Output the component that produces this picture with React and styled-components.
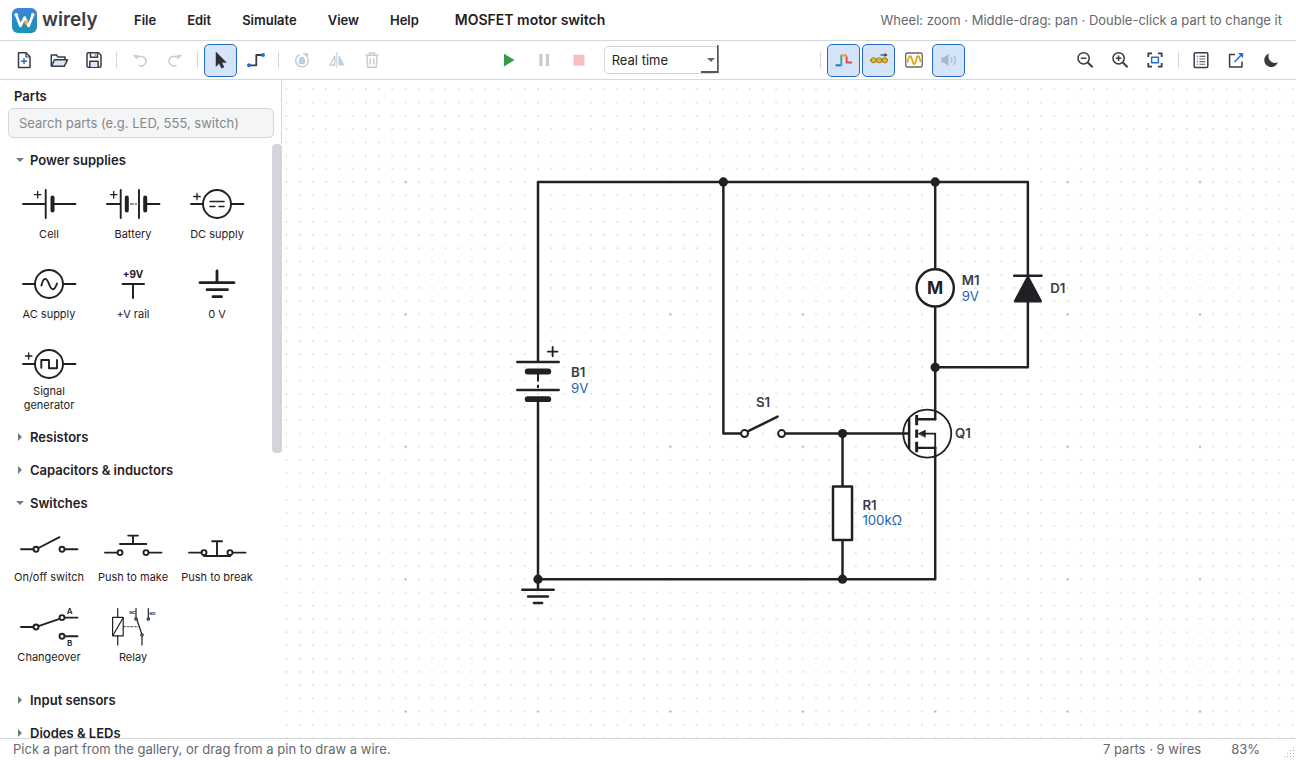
import React, { useState } from "react";
import styled, { createGlobalStyle } from "styled-components";

const GlobalStyle = createGlobalStyle`
  * {
    box-sizing: border-box;
  }
  body {
    margin: 0;
    font-family: Inter, "Liberation Sans", sans-serif;
    font-size: 13px;
    color: #1f2125;
    background: #fff;
  }
  button, input, select {
    font: inherit;
    color: inherit;
  }
`;

const Page = styled.div`
  display: flex;
  flex-direction: column;
  height: 100vh;
  overflow: hidden;
`;

const Header = styled.header`
  display: flex;
  align-items: center;
  height: 41px;
  padding: 0 14px 0 12px;
  border-bottom: 1px solid #d6d7da;
`;
const Brand = styled.a`
  display: flex;
  align-items: center;
  gap: 5px;
  width: 107px;
  font-size: 19px;
  font-weight: 600;
  line-height: 26px;
  color: #3a3c45;
  text-decoration: none;
`;
const Menu = styled.nav`
  display: flex;
`;
const MenuButton = styled.button`
  padding: 0 16px 0 15px;
  border: 0;
  background: none;
  font-weight: 600;
  line-height: 24px;
`;
const DocTitle = styled.h1`
  margin: 0 0 0 20px;
  font-size: 14px;
  font-weight: 600;
  line-height: 20px;
`;
const Hint = styled.span`
  margin-left: auto;
  color: #66686d;
`;

const Toolbar = styled.div`
  display: flex;
  align-items: center;
  justify-content: space-between;
  height: 39px;
  padding: 0 8px 0 7px;
  border-bottom: 1px solid #d6d7da;
`;
const ToolGroup = styled.div`
  display: flex;
  align-items: center;
  gap: 2px;
`;
const RunGroup = styled(ToolGroup)`
  margin-left: 7px;
`;
const DisplayGroup = styled(ToolGroup)`
  margin-right: 6px;
`;
const ToolButton = styled.button`
  display: flex;
  align-items: center;
  justify-content: center;
  width: 33px;
  height: 33px;
  padding: 0;
  border: 1px solid ${(props) => (props.$active ? "#1f6bc8" : "transparent")};
  border-radius: 5px;
  background: ${(props) => (props.$active ? "#d5e4f8" : "transparent")};
`;
const Separator = styled.span`
  width: 1px;
  height: 16px;
  margin: 0 4px;
  background: #d6d7da;
`;
const SpeedBox = styled.div`
  position: relative;
  margin-left: 6px;
  &::after {
    content: "";
    position: absolute;
    right: 0;
    bottom: 1px;
    width: 16px;
    height: 26px;
    border: solid #55575c;
    border-width: 0 2px 2px 0;
    clip-path: polygon(14px 0, 100% 0, 100% 100%, 0 100%, 0 24px, 14px 24px);
    pointer-events: none;
  }
`;
const SpeedSelect = styled.select`
  display: block;
  width: 115px;
  height: 28px;
  padding: 0 7px;
  border: 1px solid #d6d7da;
  border-radius: 5px;
  background: #fff;
  appearance: none;
`;
const Caret = styled.span`
  position: absolute;
  right: 4px;
  top: 12px;
  border: 4px solid transparent;
  border-top-color: #66686d;
  border-bottom: 0;
`;

const Body = styled.main`
  display: flex;
  flex: 1;
  min-height: 0;
`;
const Sidebar = styled.aside`
  display: flex;
  flex-direction: column;
  width: 282px;
  flex-shrink: 0;
`;
const SidebarHead = styled.div`
  height: 64px;
  padding: 8px 7px 0 8px;
  border-right: 1px solid #d6d7da;
`;
const SidebarTitle = styled.h2`
  margin: 0 0 4px 6px;
  font-size: 13px;
  font-weight: 600;
  line-height: 16px;
`;
const Search = styled.input`
  display: block;
  width: 100%;
  height: 30px;
  padding: 0 10px;
  border: 1px solid #d6d7da;
  border-radius: 5px;
  background: #f4f5f6;
  &::placeholder {
    color: #86888c;
    opacity: 1;
  }
`;
const Gallery = styled.div`
  display: flex;
  flex: 1;
  min-height: 0;
  overflow: hidden;
`;
const Sections = styled.div`
  flex: 1;
  padding-left: 7px;
`;
const ScrollTrack = styled.div`
  width: 10px;
`;
const ScrollThumb = styled.div`
  height: 52%;
  border-radius: 4px;
  background: #d3d5db;
`;
const SectionButton = styled.button`
  display: flex;
  align-items: center;
  gap: 6px;
  width: 100%;
  height: 33px;
  padding: 0 0 2px 9px;
  border: 0;
  background: none;
  font-weight: 600;
`;
const PartGrid = styled.div`
  display: grid;
  grid-template-columns: repeat(3, 84px);
  grid-auto-rows: 80px;
  padding-bottom: 4px;
`;
const PartButton = styled.button`
  display: flex;
  flex-direction: column;
  align-items: center;
  padding: 7px 0 0;
  border: 0;
  background: none;
`;
const PartLabel = styled.span`
  display: flex;
  align-items: center;
  min-height: 20px;
  max-width: 78px;
  font-size: 11px;
  line-height: 14px;
  text-align: center;
`;
const PartSymbol = styled.svg`
  display: block;
  flex-shrink: 0;
  fill: none;
  stroke: #1f2125;
  stroke-width: 1.9;
  stroke-linecap: round;
  stroke-linejoin: round;
  text {
    fill: #1f2125;
    stroke: none;
    text-anchor: middle;
  }
`;

const Canvas = styled.svg`
  display: block;
  flex: 1;
  min-width: 0;
  height: 100%;
`;
const RefText = styled.text`
  fill: #3a3c45;
  font-size: 16px;
  font-weight: 600;
`;
const ValueText = styled.text`
  fill: #1f62b8;
  font-size: 16px;
`;

const StatusBar = styled.footer`
  display: flex;
  align-items: center;
  height: 22px;
  padding: 0 0 2px 13px;
  border-top: 1px solid #d6d7da;
  color: #66686d;
`;
const StatusCounts = styled.span`
  margin-left: auto;
`;
const StatusZoom = styled.span`
  margin: 0 23px 0 30px;
`;
const SizeGrip = styled.svg`
  align-self: flex-end;
`;

const DARK = "#3a3c45";
const BLUE = "#1f6fd6";
const GREY = "#c9cbcd";

const ICONS = {
  new: (
    <g stroke={DARK}>
      <path d="M4.5 2.8H12L16 6.8V17.5H4.5Z" />
      <path d="M12 3V7H16" strokeWidth="1.2" />
      <path d="M7 11.3H13M10 8.3V14.3" stroke={BLUE} />
    </g>
  ),
  open: (
    <g stroke={DARK}>
      <path d="M2.3 16.2V5H7.5L9 7H16V9.5" />
      <path d="M2.5 16.3L5.5 9.7H18.5L15.3 16.3Z" fill="#d9e6f8" />
    </g>
  ),
  save: (
    <g stroke={DARK}>
      <path d="M4.3 2.8H14.5L17 5V16A1.3 1.3 0 0 1 15.7 17.3H4.3A1.3 1.3 0 0 1 3 16V4.1A1.3 1.3 0 0 1 4.3 2.8Z" />
      <path d="M6.5 3V7.3H13.5V3" />
      <path d="M5.8 17V11.2H14.2V17" fill="#d9e6f8" />
      <path d="M11.2 4.2V5.6" strokeWidth="1.2" />
    </g>
  ),
  undo: (
    <g stroke={GREY}>
      <path d="M5.3 6.6H12A4.7 4.7 0 1 1 8.5 15" />
      <path d="M3 5.3H7.5V9.2Z" fill={GREY} strokeWidth="0.6" />
    </g>
  ),
  redo: (
    <g stroke={GREY}>
      <path d="M14.7 6.6H8A4.7 4.7 0 1 0 11.5 15" />
      <path d="M17 5.3H12.5V9.2Z" fill={GREY} strokeWidth="0.6" />
    </g>
  ),
  pointer: (
    <path
      d="M5 2V16.4L8.2 13.3L10.6 18.2L13 17.1L10.7 12.4H15.3Z"
      fill="#2c3036"
      stroke="#2c3036"
      strokeWidth="0.5"
    />
  ),
  wire: (
    <g>
      <path d="M3 15.3H10.3V5H17" stroke={DARK} strokeWidth="1.8" />
      <circle cx="3" cy="15.3" r="2" fill={BLUE} />
      <circle cx="17" cy="5" r="2" fill={BLUE} />
    </g>
  ),
  rotate: (
    <g stroke={GREY}>
      <path d="M7.5 4.7A6.3 6.3 0 1 0 15.5 7.5" />
      <path d="M11 3.2L15.8 3.6L15.6 7.8Z" fill={GREY} strokeWidth="0.6" />
      <rect x="7.4" y="9" width="5" height="4.6" rx="0.6" fill="#b9d2ef" stroke="#b5c6da" strokeWidth="1" />
      <path d="M8.5 9V7.6H11.3V9" strokeWidth="1.1" stroke="#b5c6da" />
    </g>
  ),
  flip: (
    <g stroke={GREY}>
      <path d="M7.8 6V15H3Z" strokeWidth="1.3" />
      <path d="M12 6V15H17Z" fill="#b9d2e8" stroke="#b9d2e8" strokeWidth="1" />
      <path d="M9.9 2V18" strokeWidth="1" />
    </g>
  ),
  trash: (
    <g stroke={GREY}>
      <path d="M3.5 5.3H16.5M7.5 5V3H12.5V5M5 5.5L5.7 17.3H14.3L15 5.5M8.3 8.3V14.5M11.7 8.3V14.5" />
    </g>
  ),
  play: <path d="M5 3.8L15.5 10L5 16.4Z" fill="#2f9e44" />,
  pause: <path d="M5.3 4H8.6V16H5.3ZM11.8 4H15.1V16H11.8Z" fill={GREY} />,
  stop: <rect x="4.5" y="4.7" width="11" height="11" fill="#f6c0c1" />,
  levels: (
    <g strokeWidth="2">
      <path d="M1.6 15.3H7" stroke={BLUE} />
      <path d="M7.3 16V5.4" stroke="#27b59a" />
      <path d="M6.3 5.4H13" stroke="#ef9a1c" />
      <path d="M12.6 6.4V12.6H18" stroke="#e5484d" />
    </g>
  ),
  flow: (
    <g>
      <path d="M1 10.3H19" stroke="#6e5a20" strokeWidth="1.3" />
      <g fill="#f5b617" stroke="#6e5a20" strokeWidth="0.7">
        <circle cx="4.6" cy="10.3" r="2.6" />
        <circle cx="10.2" cy="10.3" r="2.6" />
        <circle cx="15.8" cy="10.3" r="2.6" />
      </g>
      <path d="M11.5 5H17" stroke={DARK} strokeWidth="1.2" />
      <path d="M15.5 2.9L18.6 5L15.5 7.1Z" fill={DARK} />
    </g>
  ),
  scope: (
    <g>
      <rect x="1.7" y="3" width="16.6" height="14" rx="2" stroke="#66686d" strokeWidth="1.3" />
      <path d="M3.5 12.5C5 4.5 6.8 4.5 8.2 10S10.8 15.5 12.2 10S15.2 4.5 16.5 12" stroke="#e0a100" strokeWidth="1.7" />
    </g>
  ),
  sound: (
    <g>
      <path d="M2.3 7.5H5L9.5 4V16.2L5 12.8H2.3Z" fill="#abb6c6" />
      <path d="M12 7.5Q13.7 10 12 12.7M14.8 5.5Q18.3 10 14.8 14.7" stroke="#9fc2ee" strokeWidth="1.5" />
    </g>
  ),
  zoomOut: (
    <g stroke={DARK}>
      <circle cx="8.6" cy="8.3" r="5.6" />
      <path d="M12.8 12.5L17.6 17.2" strokeWidth="1.9" />
      <path d="M5.8 8.3H11.4" />
    </g>
  ),
  zoomIn: (
    <g stroke={DARK}>
      <circle cx="8.6" cy="8.3" r="5.6" />
      <path d="M12.8 12.5L17.6 17.2" strokeWidth="1.9" />
      <path d="M5.8 8.3H11.4M8.6 5.5V11.1" />
    </g>
  ),
  fit: (
    <g stroke={DARK} strokeLinecap="butt">
      <path d="M3.3 7V3.3H7M13 3.3H16.7V7M16.7 13V16.7H13M7 16.7H3.3V13" strokeWidth="1.8" />
      <rect x="6.6" y="7.2" width="6.8" height="5.6" stroke={BLUE} />
    </g>
  ),
  list: (
    <g>
      <rect x="3.2" y="2.8" width="13.6" height="14.6" rx="1.2" stroke={DARK} />
      <path d="M5.7 6.4H6.8M5.7 9H6.8M5.7 11.6H6.8M5.7 14.2H6.8" stroke={BLUE} strokeWidth="1.1" />
      <path d="M8.4 6.4H14.3M8.4 9H14.3M8.4 11.6H14.3M8.4 14.2H14.3" stroke="#66686d" strokeWidth="1.1" />
    </g>
  ),
  share: (
    <g>
      <path d="M9 4.5H3.6V17H16V11.5" stroke={DARK} />
      <path d="M8.5 12L15 5.3" stroke={BLUE} />
      <path d="M12 3H17.2V8.2Z" fill={BLUE} />
    </g>
  ),
  moon: <path d="M8.2 3.4A7 7 0 1 0 16.9 12.3A6.6 6.6 0 0 1 8.2 3.4Z" fill={DARK} />,
};

const Tool = ({ icon, label, active, disabled, onClick }) => (
  <ToolButton
    type="button"
    aria-label={label}
    $active={active}
    disabled={disabled}
    onClick={onClick}
  >
    <svg
      width="20"
      height="20"
      viewBox="0 0 20 20"
      fill="none"
      strokeWidth="1.5"
      strokeLinejoin="round"
      aria-hidden="true"
    >
      {ICONS[icon]}
    </svg>
  </ToolButton>
);

const Logo = () => (
  <svg width="25" height="25" viewBox="0 0 25 25" aria-hidden="true">
    <defs>
      <linearGradient id="logo" x1="0" y1="0" x2="0" y2="1">
        <stop offset="0" stopColor="#3f83d8" />
        <stop offset="1" stopColor="#1795b0" />
      </linearGradient>
    </defs>
    <rect width="25" height="25" rx="6" fill="url(#logo)" />
    <path
      d="M4.2 7L8.5 18L12.6 9.5L16.6 18L20.8 7"
      fill="none"
      stroke="#fff"
      strokeWidth="2.6"
      strokeLinecap="round"
      strokeLinejoin="round"
    />
    <circle cx="4.2" cy="6.8" r="1.8" fill="#fff" />
    <circle cx="20.8" cy="6.8" r="1.8" fill="#fff" />
    <path d="M12.8 12.2L16.8 13L14.2 17.6L12 14.6Z" fill="#f0b429" />
  </svg>
);

const plus = (x, y) => (
  <path d={`M${x - 3.2} ${y}h6.4M${x} ${y - 3.2}v6.4`} strokeWidth="1.3" />
);

const POWER = [
  {
    name: "Cell",
    symbol: (
      <>
        <path d="M4 20H26.5M35 20H56.5M26.7 6V34" />
        <path d="M33.5 13.5V26.5" strokeWidth="4" />
        {plus(18.7, 10.7)}
      </>
    ),
  },
  {
    name: "Battery",
    symbol: (
      <>
        <path d="M4 20H17.5M43 20H56.5M17.7 6V34M36 6V34" />
        <path d="M23.8 13.5V26.5M42.2 13.5V26.5" strokeWidth="4" />
        <path d="M27.5 20H30.5M32.5 20H33.5" strokeWidth="1.2" />
        {plus(10.7, 10.7)}
      </>
    ),
  },
  {
    name: "DC supply",
    symbol: (
      <>
        <path d="M4 20H16M44 20H56.5" />
        <circle cx="30" cy="20" r="14" />
        <path d="M23 17.4H37M23 22.6H28M32 22.6H37" strokeWidth="1.5" />
        {plus(10, 12.5)}
      </>
    ),
  },
  {
    name: "AC supply",
    symbol: (
      <>
        <path d="M4 20H16M44 20H56.5" />
        <circle cx="30" cy="20" r="14" />
        <path d="M22.4 21.5C24.5 12.8 27.5 13 30 20S35.5 27 38 19.5" />
      </>
    ),
  },
  {
    name: "+V rail",
    symbol: (
      <>
        <path d="M19.5 20H41M30 20V34" strokeWidth="2" />
        <text x="30" y="14" fontSize="10" fontWeight="700">+9V</text>
      </>
    ),
  },
  {
    name: "0 V",
    symbol: (
      <>
        <path d="M30 7V18.5M13 18.7H47M20 25.7H40.5M26 32.7H34.5" strokeWidth="2.8" />
      </>
    ),
  },
  {
    name: "Signal generator",
    symbol: (
      <>
        <path d="M4 20H16M44 20H56.5" />
        <circle cx="30" cy="20" r="14" />
        <path d="M22.3 23.8V16H30V24.3H38V16" />
        {plus(9.7, 12)}
      </>
    ),
  },
];

const SWITCHES = [
  {
    name: "On/off switch",
    symbol: (
      <>
        <path d="M2 22.3H14.5M46 22.3H58.5M19.5 21L40.5 10.2" />
        <circle cx="17" cy="22.3" r="2.5" />
        <circle cx="43" cy="22.3" r="2.5" />
      </>
    ),
  },
  {
    name: "Push to make",
    symbol: (
      <>
        <path d="M2 25.6H14.5M46 25.6H58.5M17 17H43.3M30 17V8.6M25.2 8.6H35" />
        <circle cx="17" cy="25.6" r="2.5" />
        <circle cx="43" cy="25.6" r="2.5" />
      </>
    ),
  },
  {
    name: "Push to break",
    symbol: (
      <>
        <path d="M2 25.6H14.5M46 25.6H58.5M17 29H43.3M30 29V14.3M25.2 14.3H35" />
        <circle cx="17" cy="25.6" r="2.5" />
        <circle cx="43" cy="25.6" r="2.5" />
      </>
    ),
  },
  {
    name: "Changeover",
    symbol: (
      <>
        <path d="M2 20H14.5M46 10.6H58.5M46 29.2H58.5M19.5 19.2L40.6 11.8" />
        <circle cx="17" cy="20" r="2.5" />
        <circle cx="43" cy="10.6" r="2.5" />
        <circle cx="43" cy="29.2" r="2.5" />
        <text x="50.6" y="7.2" fontSize="8" fontWeight="600">A</text>
        <text x="50.6" y="38.6" fontSize="8" fontWeight="600">B</text>
      </>
    ),
  },
  {
    name: "Relay",
    symbol: (
      <g strokeWidth="1.2">
        <path d="M14.7 1.5V10.3M14.7 28.8V38M10 28.2L20 11M33 1.5V10.8M39 29.2V38M45.3 1.5V10.8M33.3 11L38.8 27" />
        <rect x="9.6" y="10.4" width="10.6" height="18.4" />
        <path d="M20.5 19.7H35" strokeWidth="0.8" strokeDasharray="2 1.6" />
        <circle cx="33" cy="12" r="1.2" fill="#fff" />
        <circle cx="39" cy="28" r="1.2" fill="#fff" />
        <circle cx="45.3" cy="12" r="1.2" fill="#fff" />
        <text x="29.4" y="6.8" fontSize="4" fontWeight="700">NC</text>
        <text x="49.5" y="7.8" fontSize="4" fontWeight="700">NO</text>
      </g>
    ),
  },
];

const SECTIONS = [
  { title: "Power supplies", parts: POWER, open: true },
  { title: "Resistors", parts: [] },
  { title: "Capacitors & inductors", parts: [] },
  { title: "Switches", parts: SWITCHES, open: true },
  { title: "Input sensors", parts: [] },
  { title: "Diodes & LEDs", parts: [] },
];

const Section = ({ section }) => {
  const [open, setOpen] = useState(Boolean(section.open));

  return (
    <section>
      <SectionButton
        type="button"
        aria-expanded={open}
        onClick={() => setOpen(!open)}
      >
        <svg width="8" height="8" viewBox="0 0 8 8" fill="#77797d" aria-hidden="true">
          <path d={open ? "M0 2H8L4 6Z" : "M2 0L6 4L2 8Z"} />
        </svg>
        {section.title}
      </SectionButton>
      {open && section.parts.length > 0 && (
        <PartGrid>
          {section.parts.map((part) => (
            <PartButton type="button" key={part.name}>
              <PartSymbol width="60" height="40" viewBox="0 0 60 40" aria-hidden="true">
                {part.symbol}
              </PartSymbol>
              <PartLabel>{part.name}</PartLabel>
            </PartButton>
          ))}
        </PartGrid>
      )}
    </section>
  );
};

const JUNCTIONS = [
  [224, 0],
  [480, 0],
  [480, 224],
  [368, 304],
  [0, 480],
  [368, 480],
];

// one grid step is 16 units
const Schematic = () => (
  <Canvas role="img" aria-label="MOSFET motor switch circuit">
    <defs>
      <pattern id="dots" x="-8" y="-8" width="16" height="16" patternUnits="userSpaceOnUse">
        <circle cx="8" cy="8" r="0.95" fill="#bcbec2" />
      </pattern>
      <pattern id="majors" x="-80" y="-80" width="160" height="160" patternUnits="userSpaceOnUse">
        <circle cx="80" cy="80" r="1.3" fill="#a4a6aa" />
      </pattern>
    </defs>
    <g transform="translate(256 102) scale(0.8275)">
      <rect x="-309" y="-400" width="4000" height="3000" fill="url(#dots)" />
      <rect x="-309" y="-400" width="4000" height="3000" fill="url(#majors)" />

      <g fill="none" stroke="#1f2125" strokeWidth="3" strokeLinecap="round" strokeLinejoin="round">
        <path d="M0 217V0H592V112M592 144V224H480M480 0V105M480 151V286.5M224 0V304H245" />
        <path d="M299 304H448M368 304V368M368 432V480M480 321V480H0V263" />

        {/* battery */}
        <path d="M-25 217.5H25M-25 251.4H25" />
        <path d="M-12.5 229H12.5M-12.5 262.5H12.5" strokeWidth="7" />
        <path d="M0 232V241M0 245V249" strokeWidth="2.4" strokeLinecap="butt" />
        <path d="M12 205H23.5M17.7 199.3V210.7" strokeWidth="2.2" />

        {/* ground */}
        <path d="M0 480V492M-19 492.7H19M-12 500.8H12M-5 508.8H5" />

        {/* switch */}
        <path d="M254 301L289.5 283.5" />
        <circle cx="249.6" cy="304" r="4.2" strokeWidth="2.4" fill="#fff" />
        <circle cx="294.4" cy="304" r="4.2" strokeWidth="2.4" fill="#fff" />

        {/* resistor */}
        <rect x="356.5" y="368" width="23" height="64.5" fill="#fff" />

        {/* motor */}
        <circle cx="480" cy="128" r="22.5" fill="#fff" />

        {/* diode */}
        <path d="M575.5 113.3H608.5" />
        <path d="M592 115L607.5 144H576.5Z" fill="#1f2125" />

        {/* mosfet */}
        <circle cx="470.4" cy="304" r="29" strokeWidth="2.2" />
        <path d="M448.5 286V322" />
        <path d="M457.6 281.5V294M457.6 299V309M457.6 314V326.5" strokeWidth="3.6" strokeLinecap="butt" />
        <path d="M457.6 286.7H480M457.6 321.3H480" />
        <path d="M464 304H480V321" strokeWidth="2.2" />
        <path d="M460 304L468 300V308Z" fill="#1f2125" strokeWidth="1" />
      </g>

      {JUNCTIONS.map(([x, y]) => (
        <circle key={`${x}-${y}`} cx={x} cy={y} r="5.6" fill="#1f2125" />
      ))}

      <text x="480" y="135.5" textAnchor="middle" fontSize="21" fontWeight="700" fill="#1f2125">
        M
      </text>
      <RefText x="40" y="236">B1</RefText>
      <ValueText x="40" y="255">9V</ValueText>
      <RefText x="272" y="272" textAnchor="middle">S1</RefText>
      <RefText x="392" y="396">R1</RefText>
      <ValueText x="392" y="415">100kΩ</ValueText>
      <RefText x="512" y="125">M1</RefText>
      <ValueText x="512" y="144">9V</ValueText>
      <RefText x="619" y="134">D1</RefText>
      <RefText x="504" y="309">Q1</RefText>
    </g>
  </Canvas>
);

const App = () => {
  const [mode, setMode] = useState("select");

  return (
    <Page>
      <GlobalStyle />
      <Header>
        <Brand href="#">
          <Logo />
          wirely
        </Brand>
        <Menu>
          {["File", "Edit", "Simulate", "View", "Help"].map((item) => (
            <MenuButton type="button" key={item}>
              {item}
            </MenuButton>
          ))}
        </Menu>
        <DocTitle>MOSFET motor switch</DocTitle>
        <Hint>Wheel: zoom · Middle-drag: pan · Double-click a part to change it</Hint>
      </Header>

      <Toolbar>
        <ToolGroup>
          <Tool icon="new" label="New" />
          <Tool icon="open" label="Open" />
          <Tool icon="save" label="Save" />
          <Separator />
          <Tool icon="undo" label="Undo" disabled />
          <Tool icon="redo" label="Redo" disabled />
          <Separator />
          <Tool
            icon="pointer"
            label="Select"
            active={mode === "select"}
            onClick={() => setMode("select")}
          />
          <Tool
            icon="wire"
            label="Wire"
            active={mode === "wire"}
            onClick={() => setMode("wire")}
          />
          <Separator />
          <Tool icon="rotate" label="Rotate" disabled />
          <Tool icon="flip" label="Flip" disabled />
          <Tool icon="trash" label="Delete" disabled />
        </ToolGroup>
        <RunGroup>
          <Tool icon="play" label="Run" />
          <Tool icon="pause" label="Pause" disabled />
          <Tool icon="stop" label="Stop" disabled />
          <SpeedBox>
            <SpeedSelect aria-label="Simulation speed">
              <option>Real time</option>
            </SpeedSelect>
            <Caret />
          </SpeedBox>
        </RunGroup>
        <DisplayGroup>
          <Separator />
          <Tool icon="levels" label="Voltage colours" active />
          <Tool icon="flow" label="Current flow" active />
          <Tool icon="scope" label="Oscilloscope" />
          <Tool icon="sound" label="Sound" active disabled />
        </DisplayGroup>
        <ToolGroup>
          <Tool icon="zoomOut" label="Zoom out" />
          <Tool icon="zoomIn" label="Zoom in" />
          <Tool icon="fit" label="Fit to window" />
          <Separator />
          <Tool icon="list" label="Parts list" />
          <Tool icon="share" label="Export" />
          <Tool icon="moon" label="Dark theme" />
        </ToolGroup>
      </Toolbar>

      <Body>
        <Sidebar>
          <SidebarHead>
            <SidebarTitle>Parts</SidebarTitle>
            <Search
              type="search"
              aria-label="Search parts"
              placeholder="Search parts (e.g. LED, 555, switch)"
            />
          </SidebarHead>
          <Gallery>
            <Sections>
              {SECTIONS.map((section) => (
                <Section key={section.title} section={section} />
              ))}
            </Sections>
            <ScrollTrack>
              <ScrollThumb />
            </ScrollTrack>
          </Gallery>
        </Sidebar>
        <Schematic />
      </Body>

      <StatusBar>
        <span>Pick a part from the gallery, or drag from a pin to draw a wire.</span>
        <StatusCounts>7 parts · 9 wires</StatusCounts>
        <StatusZoom>83%</StatusZoom>
        <SizeGrip width="13" height="13" viewBox="0 0 13 13" fill="#b4b6b9" aria-hidden="true">
          {[0, 1, 2, 3].map((row) =>
            Array.from({ length: row + 1 }, (_, i) => (
              <rect key={`${row}-${i}`} x={10 - i * 3} y={2 + row * 3} width="1" height="1" />
            ))
          )}
        </SizeGrip>
      </StatusBar>
    </Page>
  );
};

export default App;
